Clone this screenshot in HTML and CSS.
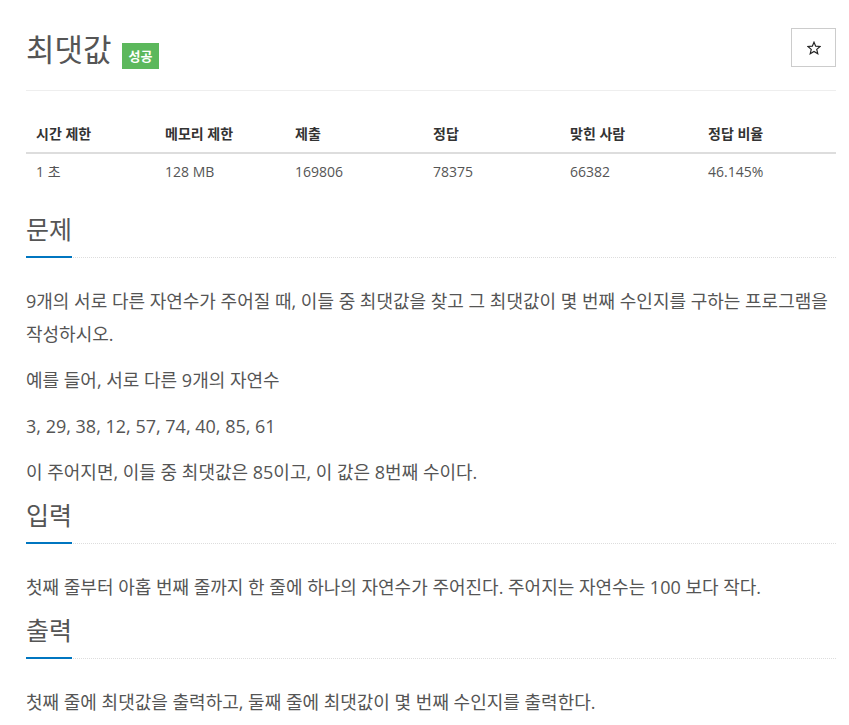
FILE: index.html
```html
<!DOCTYPE html>
<html lang="ko">
<head>
    <meta charset="UTF-8">
    <meta name="viewport" content="width=device-width, initial-scale=1.0">
    <title>최댓값</title>
    <link rel="stylesheet" href="styles.css">
</head>
<body>
    <div class="problem-container">
        <div class="page-header">
            <h1 class="problem-title">
                <span>최댓값</span>
                <span class="label-success">성공</span>
            </h1>
            <button class="star-btn" type="button" aria-label="즐겨찾기">
                <svg width="14" height="14" viewBox="0 0 24 24">
                    <polygon points="12,2 14.9,8.9 22.5,9.5 16.7,14.4 18.5,21.8 12,17.8 5.5,21.8 7.3,14.4 1.5,9.5 9.1,8.9" fill="none" stroke="#222" stroke-width="2" stroke-linejoin="miter"/>
                </svg>
            </button>
        </div>

        <table class="problem-info">
            <colgroup>
                <col class="col-time">
                <col class="col-memory">
                <col class="col-submit">
                <col class="col-accepted">
                <col class="col-users">
                <col class="col-ratio">
            </colgroup>
            <thead>
                <tr>
                    <th>시간 제한</th>
                    <th>메모리 제한</th>
                    <th>제출</th>
                    <th>정답</th>
                    <th>맞힌 사람</th>
                    <th>정답 비율</th>
                </tr>
            </thead>
            <tbody>
                <tr>
                    <td>1 초</td>
                    <td>128 MB</td>
                    <td>169806</td>
                    <td>78375</td>
                    <td>66382</td>
                    <td>46.145%</td>
                </tr>
            </tbody>
        </table>

        <section class="problem-section">
            <div class="headline">
                <h2>문제</h2>
            </div>
            <div class="problem-text">
                <p>9개의 서로 다른 자연수가 주어질 때, 이들 중 최댓값을 찾고 그 최댓값이 몇 번째 수인지를 구하는 프로그램을 작성하시오.</p>
                <p>예를 들어, 서로 다른 9개의 자연수</p>
                <p>3, 29, 38, 12, 57, 74, 40, 85, 61</p>
                <p>이 주어지면, 이들 중 최댓값은 85이고, 이 값은 8번째 수이다.</p>
            </div>
        </section>

        <section class="problem-section">
            <div class="headline">
                <h2>입력</h2>
            </div>
            <div class="problem-text">
                <p>첫째 줄부터 아홉 번째 줄까지 한 줄에 하나의 자연수가 주어진다. 주어지는 자연수는 100 보다 작다.</p>
            </div>
        </section>

        <section class="problem-section">
            <div class="headline">
                <h2>출력</h2>
            </div>
            <div class="problem-text">
                <p>첫째 줄에 최댓값을 출력하고, 둘째 줄에 최댓값이 몇 번째 수인지를 출력한다.</p>
            </div>
        </section>
    </div>
</body>
</html>
```

FILE: styles.css
```css
/* base */
body {
    font-family: "Open Sans", "Noto Sans CJK KR", sans-serif;
    color: #555;
    background-color: #fff;
    margin: 0;
    padding: 0;
}

.problem-container {
    width: 810px;
    margin-left: 26px;
}

/* title row */
.page-header {
    display: flex;
    justify-content: space-between;
    align-items: flex-start;
    padding-top: 28px;
    padding-bottom: 20px;
    border-bottom: 1px solid #eee;
    margin-bottom: 25px;
}

.problem-title {
    display: flex;
    align-items: flex-start;
    gap: 10px;
    margin: 0;
    font-size: 31px;
    font-weight: normal;
    line-height: 42px;
    color: #555;
}

.label-success {
    margin-top: 15px;
    padding: 0 7px;
    background-color: #5cb85c;
    color: #fff;
    font-size: 13px;
    font-weight: bold;
    line-height: 26px;
}

.star-btn {
    width: 45px;
    height: 39px;
    background-color: #fff;
    border: 1px solid #ccc;
    padding: 0;
    display: flex;
    align-items: center;
    justify-content: center;
    cursor: pointer;
}

/* info table */
.problem-info {
    width: 810px;
    table-layout: fixed;
    border-collapse: collapse;
    margin-bottom: 23px;
    font-size: 14px;
    line-height: 20px;
}

.problem-info th,
.problem-info td {
    padding: 8px 8px 8px 10px;
    text-align: left;
}

.problem-info th {
    color: #333;
    font-weight: bold;
    border-bottom: 2px solid #ddd;
}

.col-time { width: 129px; }
.col-memory { width: 130px; }
.col-submit { width: 138px; }
.col-accepted { width: 137px; }
.col-users { width: 138px; }
.col-ratio { width: 138px; }

/* sections */
.headline {
    border-bottom: 1px dotted #ddd;
    margin: 10px 0 27px;
}

.headline h2 {
    display: inline-block;
    margin: 0 0 -1px;
    padding-bottom: 11px;
    border-bottom: 2px solid #0076c0;
    font-size: 25px;
    font-weight: normal;
    line-height: 32px;
    color: #555;
}

.problem-text {
    font-size: 18px;
    line-height: 33px;
}

.problem-text p {
    margin: 0 0 13px;
}

.problem-text p:last-child {
    margin-bottom: 0;
}
```
